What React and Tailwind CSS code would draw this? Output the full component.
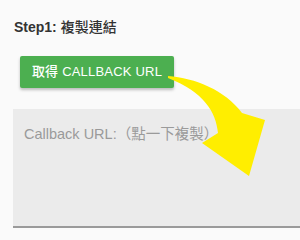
export default function App() {
  return (
    <div
      className="relative w-[300px] h-[240px] overflow-hidden bg-[#fafafa]"
      style={{ fontFamily: '"Liberation Sans", Arial, "Noto Sans CJK TC", sans-serif' }}
    >
      <div className="pt-[17px] pl-[14px]">
        {/* Title */}
        <h2 className="text-[14px] leading-[20px] text-[#333]">
          <span className="font-bold">Step1:</span> <span className="font-medium">複製連結</span>
        </h2>

        {/* Button */}
        <button className="mt-[19px] ml-[6px] h-[32px] w-[154px] rounded-[2px] bg-[#4caf50] text-white text-[13px] font-medium tracking-[0.2px] shadow-[0_2px_3px_rgba(0,0,0,0.25)] flex items-center justify-center">
          取得 CALLBACK URL
        </button>

        {/* Textarea */}
        <div className="mt-[21px] ml-[-1px] h-[119px] bg-[#ebebeb] border-b-2 border-[#9a9a9a] pl-[11px] pt-[15px]">
          <p className="text-[14.5px] leading-[20px] text-[#9a9a9a]">Callback URL:（點一下複製）</p>
        </div>
      </div>

      {/* Arrow overlay */}
      <svg className="absolute inset-0 pointer-events-none" width="300" height="240" viewBox="0 0 300 240">
        <path
          d="M168 76 C 195 78, 225 90, 242 113 L 265 120 L 249 176 L 202 143 L 218 133 C 216 112, 204 92, 168 78 Z"
          fill="#ffee00"
        />
      </svg>
    </div>
  );
}
